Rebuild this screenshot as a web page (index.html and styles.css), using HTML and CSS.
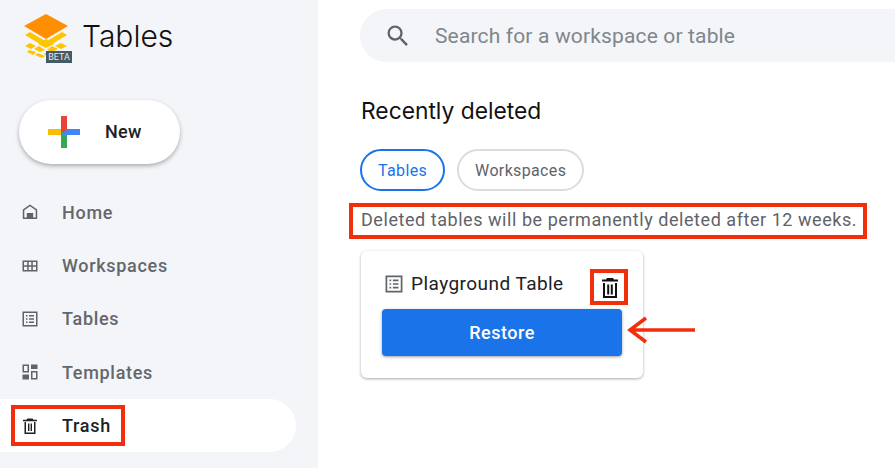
FILE: index.html
```html
<!DOCTYPE html>
<html lang="en">
<head>
  <meta charset="UTF-8" />
  <title>Tables - Trash</title>
  <link rel="stylesheet" href="styles.css">
</head>
<body>
  <div class="app">
    <aside class="sidebar">
      <div class="brand">
        <div class="logo">
          <svg width="44" height="48" viewBox="0 0 44 48">
            <polygon points="22,0 44,12 22,25 0,12" fill="#ff8f00"/>
            <g fill="#ffc400">
              <polygon points="6,18 21,27 16,30 1,21"/>
              <polygon points="38,18 43,21 28,30 23,27"/>
              <polygon points="22,25 30,30 22,34 14,30"/>
              <polygon points="6,29 12,32 7,35 1,32"/>
              <polygon points="15,32 21,36 16,38 10,35"/>
              <polygon points="28,32 34,35 28,38 23,36"/>
              <polygon points="37,29 43,32 37,35 31,32"/>
              <polygon points="5,36 12,38 9,41 3,38"/>
              <polygon points="14,39 21,42 18,44 11,41"/>
              <polygon points="24,37 30,40 24,43 20,40"/>
            </g>
          </svg>
          <span class="beta">BETA</span>
        </div>
        <span class="brand-name">Tables</span>
      </div>

      <button class="new-btn">
        <svg width="32" height="32" viewBox="0 0 32 32">
          <rect x="0" y="13" width="16" height="6" fill="#fbbc04"/>
          <rect x="13" y="0" width="6" height="16" fill="#ea4335"/>
          <rect x="13" y="16" width="6" height="16" fill="#34a853"/>
          <polygon points="13,19 19,13 32,13 32,19" fill="#4285f4"/>
        </svg>
        <span class="new-label">New</span>
      </button>

      <nav class="nav">
        <a class="nav-item">
          <svg class="nav-icon" viewBox="0 0 16 16"><path d="M8 .5 .8 5.500v9.500h14.400V5.500zM2.300 13.500V6.300L8 2.300l5.700 4v7.200h-2.500V9H4.800v4.500z" fill="#5f6368"/></svg>
          Home
        </a>
        <a class="nav-item">
          <svg class="nav-icon" viewBox="0 0 16 16"><path d="M.5 2.500h15v11H.5zM2 4v3.300h3.200V4zm4.700 0v3.300h2.600V4zm4.100 0v3.300H14V4zM2 8.700V12h3.200V8.700zm4.700 0V12h2.600V8.700zm4.100 0V12H14V8.700z" fill="#5f6368" fill-rule="evenodd"/></svg>
          Workspaces
        </a>
        <a class="nav-item">
          <svg class="nav-icon" viewBox="0 0 16 16"><path d="M.5.500h15v15H.5zM2 2v12h12V2zM4 4h1.500v1.500H4zm3 0h5v1.500H7zM4 7.250h1.500v1.500H4zm3 0h5v1.500H7zM4 10.500h1.500V12H4zm3 0h5V12H7z" fill="#5f6368" fill-rule="evenodd"/></svg>
          Tables
        </a>
        <a class="nav-item">
          <svg class="nav-icon" viewBox="0 0 16 16"><path d="M.5.500h6.500v8H.5zM2 2v5h3.500V2zM9 .5h6.500V5H9zM.5 10.500H7v5H.5zM9 7h6.500v8.500H9zm1.500 1.500V14H14V8.500z" fill="#5f6368" fill-rule="evenodd"/></svg>
          Templates
        </a>
        <a class="nav-item active">
          <svg class="nav-icon" viewBox="0 0 16 16"><path d="M5.500.5h5l1 1.200H15v1.500H1V1.700h3.500zM2.500 4H4v10.500h8V4h1.500v12h-11zM6 5.500h1.400V13H6zm2.600 0H10V13H8.600z" fill="#202124"/></svg>
          Trash
        </a>
      </nav>
    </aside>

    <main class="content">
      <div class="search">
        <svg width="28" height="28" viewBox="0 0 24 24"><path d="M15.500 14h-.79l-.28-.27A6.470 6.470 0 0 0 16 9.500 6.500 6.500 0 1 0 9.500 16c1.610 0 3.090-.59 4.230-1.570l.27.28v.79l5 4.990L20.490 19zm-6 0C7.010 14 5 11.990 5 9.500S7.010 5 9.500 5 14 7.010 14 9.500 11.990 14 9.500 14z" fill="#5f6368"/></svg>
        <span class="search-text">Search for a workspace or table</span>
      </div>

      <h2 class="title">Recently deleted</h2>

      <div class="chips">
        <span class="chip selected">Tables</span>
        <span class="chip">Workspaces</span>
      </div>

      <p class="notice">Deleted tables will be permanently deleted after 12 weeks.</p>

      <div class="card">
        <div class="card-head">
          <svg class="card-icon" viewBox="0 0 16 16"><path d="M.5.500h15v15H.5zM2 2v12h12V2zM4 4h1.500v1.500H4zm3 0h5v1.500H7zM4 7.250h1.500v1.500H4zm3 0h5v1.500H7zM4 10.500h1.500V12H4zm3 0h5V12H7z" fill="#5f6368" fill-rule="evenodd"/></svg>
          <span class="card-name">Playground Table</span>
          <svg class="card-trash" viewBox="0 0 16 20"><path d="M5 0h6l1 1.500h4v2H0v-2h4zM1 5h2v13h10V5h2v15H1zM5.200 6.500h2v10h-2zm3.600 0h2v10h-2z" fill="#111"/></svg>
        </div>
        <button class="restore-btn">Restore</button>
      </div>
    </main>

    <div class="mark mark-trash"></div>
    <div class="mark mark-notice"></div>
    <div class="mark mark-delete"></div>
    <svg class="arrow" width="68" height="28" viewBox="0 0 68 28">
      <path d="M2 14H68M19 2 3 14l16 12" fill="none" stroke="#f22f0c" stroke-width="3.500"/>
    </svg>
  </div>
</body>
</html>
```

FILE: styles.css
```css
html, body {
  margin: 0;
  height: 100%;
  overflow: hidden;
}
body {
  font-family: Roboto, 'Liberation Sans', sans-serif;
  background-color: #fff;
  color: #202124;
}
.app {
  position: relative;
  display: flex;
  height: 468px;
}

/* sidebar */
.sidebar {
  width: 318px;
  flex-shrink: 0;
  background-color: #f3f5f9;
  box-sizing: border-box;
  padding-top: 14px;
}
.brand {
  display: flex;
  align-items: flex-start;
  padding-left: 24px;
  gap: 14px;
}
.logo {
  position: relative;
  width: 44px;
  height: 48px;
}
.beta {
  position: absolute;
  left: 22px;
  top: 37px;
  width: 26px;
  height: 12px;
  background-color: #455a64;
  color: #e8eaed;
  font-size: 9px;
  line-height: 12px;
  text-align: center;
}
.brand-name {
  font-family: Inter, Roboto, sans-serif;
  font-size: 30px;
  font-weight: 300;
  line-height: 44px;
  color: #111;
}
.new-btn {
  display: flex;
  align-items: center;
  gap: 25px;
  width: 161px;
  height: 64px;
  margin: 38px 0 0 19px;
  padding: 0 0 0 29px;
  border: 0;
  border-radius: 32px;
  background-color: #fff;
  box-shadow: 0 2px 4px rgba(60, 64, 67, 0.4);
  font-family: inherit;
  font-size: 18px;
  font-weight: 500;
  letter-spacing: 0.3px;
  color: #202124;
}
.new-label {
  margin-bottom: 2px;
}
.nav {
  margin-top: 21.500px;
}
.nav-item {
  display: flex;
  align-items: center;
  gap: 24px;
  width: 296px;
  height: 53.400px;
  box-sizing: border-box;
  padding-left: 22px;
  border-radius: 0 27px 27px 0;
  font-size: 18px;
  font-weight: 500;
  letter-spacing: 0.7px;
  color: #63676c;
}
.nav-item.active {
  background-color: #fff;
  color: #202124;
}
.nav-icon {
  width: 16px;
  height: 16px;
}

/* main */
.content {
  flex: 1;
  min-width: 0;
  padding: 9px 0 0 42px;
}
.search {
  display: flex;
  align-items: center;
  height: 53px;
  padding-left: 24px;
  gap: 23px;
  border-radius: 27px 0 0 27px;
  background-color: #f3f5f9;
}
.search-text {
  font-size: 21px;
  letter-spacing: 0.15px;
  color: #80868b;
}
.title {
  margin: 33px 0 0 1px;
  font-family: Inter, Roboto, sans-serif;
  font-size: 22.800px;
  font-weight: 400;
  line-height: 32px;
  color: #111;
}
.chips {
  display: flex;
  gap: 12px;
  margin-top: 22px;
}
.chip {
  display: flex;
  align-items: center;
  box-sizing: border-box;
  height: 42px;
  padding: 0 16px;
  border: 2px solid #dadce0;
  border-radius: 21px;
  font-size: 16px;
  letter-spacing: 0.35px;
  color: #5f6368;
}
.chip.selected {
  border-color: #1a73e8;
  color: #1a73e8;
}
.notice {
  margin: 18px 0 0 1px;
  font-size: 18px;
  line-height: 22px;
  letter-spacing: 0.55px;
  color: #5f6368;
}
.card {
  box-sizing: border-box;
  width: 282px;
  height: 127px;
  margin: 20px 0 0 1px;
  padding: 18px 21px 0;
  border-radius: 6px;
  background-color: #fff;
  box-shadow: 0 1px 3px rgba(60, 64, 67, 0.45);
}
.card-head {
  display: flex;
  align-items: center;
  height: 30px;
  padding-left: 3px;
}
.card-icon {
  width: 18px;
  height: 18px;
  margin-right: 8px;
}
.card-name {
  flex: 1;
  margin-bottom: 2px;
  font-size: 19px;
  letter-spacing: 0.45px;
  color: #202124;
}
.card-trash {
  width: 16px;
  height: 20px;
  margin-right: 4px;
  margin-top: 7px;
}
.restore-btn {
  display: block;
  width: 240px;
  height: 47px;
  margin-top: 10px;
  border: 0;
  border-radius: 4px;
  background-color: #1a73e8;
  box-shadow: 0 1px 3px rgba(60, 64, 67, 0.5);
  font-family: inherit;
  font-size: 18px;
  font-weight: 500;
  letter-spacing: 0.5px;
  color: #fff;
}

/* red annotations drawn over the screenshot */
.mark {
  position: absolute;
  box-sizing: border-box;
  border: 4px solid #f22f0c;
}
.mark-trash {
  left: 11px;
  top: 405px;
  width: 114px;
  height: 41px;
}
.mark-notice {
  left: 349px;
  top: 203px;
  width: 518px;
  height: 36px;
}
.mark-delete {
  left: 590px;
  top: 269px;
  width: 38px;
  height: 36px;
}
.arrow {
  position: absolute;
  left: 627px;
  top: 316px;
}
```
